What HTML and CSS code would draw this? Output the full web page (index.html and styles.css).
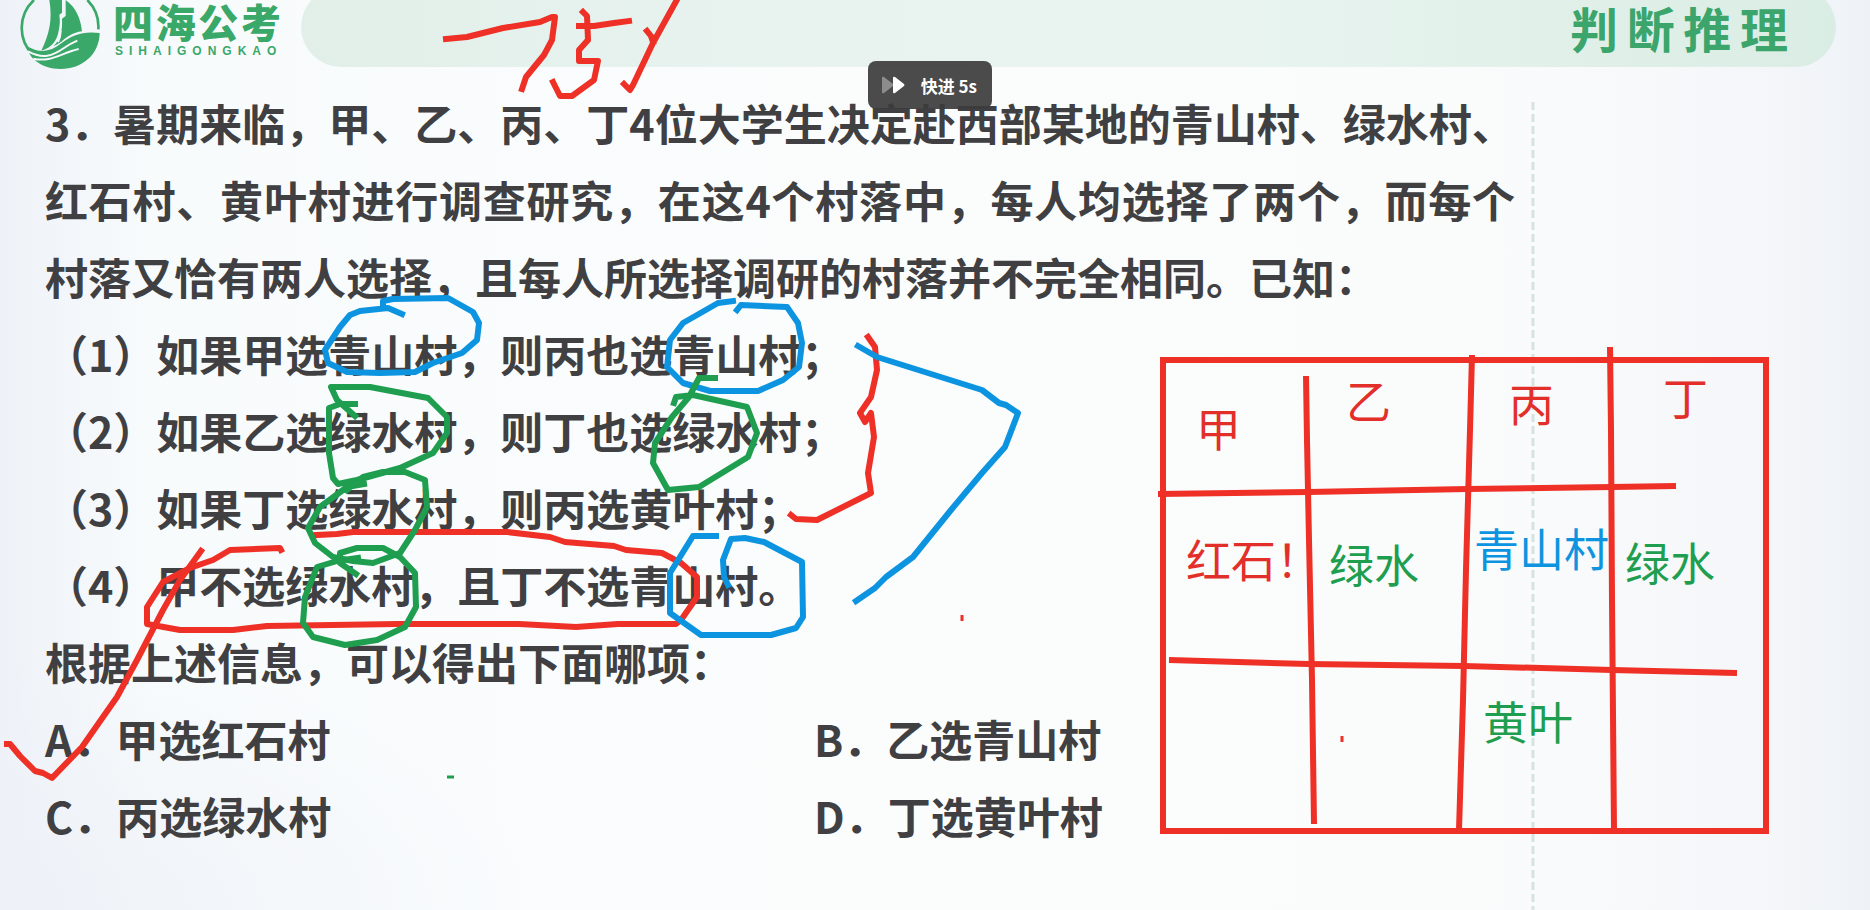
FILE: index.html
```html
<!DOCTYPE html>
<html lang="zh-CN">
<head>
<meta charset="utf-8">
<title>判断推理</title>
<link rel="stylesheet" href="styles.css">
</head>
<body>
<div class="slide">
  <header class="header">
    <div class="brand">
      <svg class="brand-mark" viewBox="60 0 240 210" aria-hidden="true">
        <path d="M102 0A114 114 0 0 0 100 166M262 0A114 114 0 0 1 295 88" fill="none" stroke="#3aa869" stroke-width="8"/>
        <path d="M148 0H186V38L178 44C181 62 179 78 176 92C172 118 158 142 124 152C148 102 158 60 148 0Z" fill="#3aa869"/>
        <path d="M197 0C230 24 242 58 246 94C218 98 202 110 184 125C176 130 168 136 160 138C182 120 188 90 186 56L197 48Z" fill="#3aa869"/>
        <path d="M174 126Q182 110 182 92" fill="none" stroke="#f6f9fb" stroke-width="6"/>
        <path d="M84 140C120 160 152 156 184 130C214 106 250 92 299 99C298 164 246 207 182 207C152 207 124 198 104 180C92 170 84 156 84 140Z" fill="#3aa869"/>
        <path d="M84 154C128 178 158 168 192 144C206 134 218 128 232 122M100 176C150 188 182 160 236 147" fill="none" stroke="#f6f9fb" stroke-width="6"/>
      </svg>
      <div class="brand-text">
        <div class="brand-name">四海公考</div>
        <div class="brand-latin">SIHAIGONGKAO</div>
      </div>
    </div>
    <div class="banner"><h1 class="banner-title">判断推理</h1></div>
  </header>

  <main class="question">
    <p class="line">3．暑期来临，甲、乙、丙、丁4位大学生决定赴西部某地的青山村、绿水村、</p>
    <p class="line line-full">红石村、黄叶村进行调查研究，在这4个村落中，每人均选择了两个，而每个</p>
    <p class="line">村落又恰有两人选择，且每人所选择调研的村落并不完全相同。已知：</p>
    <p class="line">（1）如果甲选青山村，则丙也选青山村；</p>
    <p class="line">（2）如果乙选绿水村，则丁也选绿水村；</p>
    <p class="line">（3）如果丁选绿水村，则丙选黄叶村；</p>
    <p class="line">（4）甲不选绿水村，且丁不选青山村。</p>
    <p class="line">根据上述信息，可以得出下面哪项：</p>
    <div class="options">
      <p class="line">A．甲选红石村</p>
      <p class="line">B．乙选青山村</p>
      <p class="line">C．丙选绿水村</p>
      <p class="line">D．丁选黄叶村</p>
    </div>
  </main>

  <svg class="ink" viewBox="0 0 1870 910" preserveAspectRatio="xMinYMin meet">
    <path class="guide" d="M1533 102V910"/>

    <g class="pen red">
      <path d="M446 39L467 37L503 28L540 22L552 17L555 17L552 40L544 55L526 77L522 89"/>
      <path d="M583 12L587 16L588 40L579 50V61H598L594 80L572 96H560L553 82M579 26H594L614 23L629 21"/>
      <path d="M679 -4L653 43L633 85L630 90L624 84M647 31L651 36L653 42"/>
      <path d="M316 535L337 534L353 532H507L550 537L565 542L614 546L626 550L662 553L681 563L697 577V597L681 620L676 624H618L576 627L519 624H397L267 626L233 630H180L147 624V607L163 582L190 568L213 560L230 550L280 548L281 550"/>
      <path d="M201 551L180 580L163 610L137 660L117 697L82 747L52 778L43 773L35 771L20 756L10 744H7"/>
      <path d="M868 337L875 347L877 370L871 397L860 413L865 422L871 413L874 437L868 473L871 493L817 520L796 519L791 515"/>
    </g>
    <g class="pen blue">
      <path d="M402 314L388 308L360 311L350 315L340 327L325 350L328 363L347 372L380 373L415 372L433 363L462 353L477 340L479 323L473 312L448 298L393 299L383 301V305"/>
      <path d="M733 301L718 303L683 323L670 340L667 367L683 383L710 391H758L783 380L799 367L802 343L798 323L787 307L741 305L737 310"/>
      <path d="M716 536H693L680 557L670 573V613L701 635H771L796 628L803 617L802 562L764 542L745 538L731 539L723 560L724 577L728 585"/>
      <path d="M858 346L877 357L982 390L999 403L1006 405L1018 413L1005 447L982 473L951 510L913 557L886 577L875 588L856 601"/>
    </g>
    <g class="pen green">
      <path d="M355 404H340L329 408V453L333 478L338 484L357 480L400 468L433 453L447 433V417L428 398L370 387H331L337 400L355 416"/>
      <path d="M364 484L347 487L320 507L308 528L315 543L333 557L353 561L373 563L400 553L415 530L427 507L425 480L405 472H383L363 477L347 490"/>
      <path d="M356 574L340 563V553L357 548H383L400 557L415 573L416 607L405 627L377 640L345 645L313 637L303 623L305 597L317 567L337 561L358 558"/>
      <path d="M715 378H699L689 397L672 417L655 443L653 463L668 490L699 487L748 457L757 433L747 407L693 395L676 397L674 403"/>
    </g>
    <path class="speck red" d="M962 615V621M1342 736V742"/>
    <path class="speck green" d="M447 777H454"/>

    <g class="pen red grid-lines">
      <rect x="1163" y="360" width="603" height="471"/>
      <path d="M1306 376L1307 440L1309 540L1312 680L1314 824M1472 355L1470 430L1466 570L1463 700L1459 830M1610 347L1611 430L1612 600L1614 830"/>
      <path d="M1158 494L1308 492L1468 489L1612 487L1676 486M1169 660L1308 664L1464 666L1612 670L1737 673"/>
    </g>
    <g class="note red">
      <text x="1196" y="447">甲</text>
      <text x="1346" y="419">乙</text>
      <text x="1509" y="422">丙</text>
      <text x="1663" y="416">丁</text>
      <text x="1186" y="578">红石！</text>
    </g>
    <g class="note green">
      <text x="1329" y="583">绿水</text>
      <text x="1625" y="581">绿水</text>
      <text x="1483" y="740">黄叶</text>
    </g>
    <text class="note blue" x="1474" y="567">青山村</text>
  </svg>

  <div class="toast" role="status">
    <svg class="toast-icon" viewBox="0 0 24 18" aria-hidden="true">
      <path d="M1 2Q1 0 3 1L12 8Q13 9 12 10L3 17Q1 18 1 16Z" fill="#8c8c8c"/>
      <path d="M12 2Q12 0 14 1L23 8Q24 9 23 10L14 17Q12 18 12 16Z" fill="#fff"/>
    </svg>
    <span>快进 5s</span>
  </div>
</div>
</body>
</html>
```
FILE: styles.css
```css
* {
  box-sizing: border-box;
}

body {
  margin: 0;
  background: #f9fbfc;
  color: #404042;
  font-family: "Noto Sans CJK SC", sans-serif;
}

.slide {
  position: relative;
  min-height: 100vh;
  overflow: hidden;
  background:
    radial-gradient(ellipse at 0 100%, #eef2f8, rgba(238, 242, 248, 0) 20%),
    linear-gradient(90deg, #eef2f8, #f8fbfc 8%, #fbfdfd 50%, #fafcfc 78%, #f4f6f9 95%, #eef2f7);
}

.header {
  display: flex;
  align-items: flex-start;
  gap: 20px;
  padding: 0 34px 0 20px;
}

.brand {
  display: flex;
  gap: 13px;
  color: #3aa869;
}

.brand-mark {
  width: 80px;
  height: 70px;
}

.brand-text {
  width: 168px;
}

.brand-name {
  font-size: 40px;
  font-weight: 900;
  line-height: 43px;
  text-align-last: justify;
}

.brand-latin {
  padding-left: 2px;
  font: 700 12px/16px "Liberation Sans", Arial, sans-serif;
  letter-spacing: 6px;
  white-space: nowrap;
}

.banner {
  display: flex;
  flex: 1;
  align-items: center;
  justify-content: flex-end;
  height: 80px;
  margin-top: -13px;
  padding-right: 48px;
  border-radius: 40px;
  background: linear-gradient(90deg, #e2efe8, #e8f3f0 30%, #e9f4f0 60%, #daede4);
}

.banner-title {
  width: 218px;
  margin: 0;
  color: #3ba56b;
  font-size: 48px;
  font-weight: 700;
  line-height: 80px;
  text-align-last: justify;
}

.question {
  width: 1470px;
  max-width: 100%;
  margin-left: 45px;
  padding-top: 14px;
}

.line {
  margin: 0;
  font-size: 43px;
  font-weight: 700;
  line-height: 77px;
  white-space: nowrap;
}

.line-full {
  text-align-last: justify;
  white-space: normal;
}

.options {
  display: grid;
  grid-template-columns: 769px 1fr;
}

.ink {
  position: absolute;
  top: 0;
  left: 0;
  width: 100%;
}

.pen {
  fill: none;
  stroke-width: 6;
  stroke-linecap: square;
  stroke-linejoin: round;
}

.grid-lines {
  stroke-linecap: butt;
  stroke-linejoin: miter;
}

.speck {
  fill: none;
  stroke-width: 3;
}

.pen.red,
.speck.red {
  stroke: #ee3026;
}

.pen.blue {
  stroke: #0d94e0;
}

.pen.green,
.speck.green {
  stroke: #1e9e4e;
}

.guide {
  fill: none;
  stroke: #d6e4e0;
  stroke-width: 3;
  stroke-dasharray: 8 4;
}

.note {
  font-size: 45px;
  font-weight: 400;
}

.note.red {
  fill: #e32f2a;
}

.note.green {
  fill: #1e9e4e;
}

.note.blue {
  fill: #0d94e0;
}

.toast {
  position: absolute;
  top: 61px;
  left: 46.4%;
  display: flex;
  align-items: center;
  gap: 16px;
  height: 48px;
  padding: 0 15px 0 13px;
  border-radius: 8px;
  background: rgba(60, 60, 60, 0.92);
  color: #fff;
  font-size: 17px;
  font-weight: 700;
  white-space: nowrap;
}

.toast-icon {
  width: 24px;
  height: 18px;
}
```
